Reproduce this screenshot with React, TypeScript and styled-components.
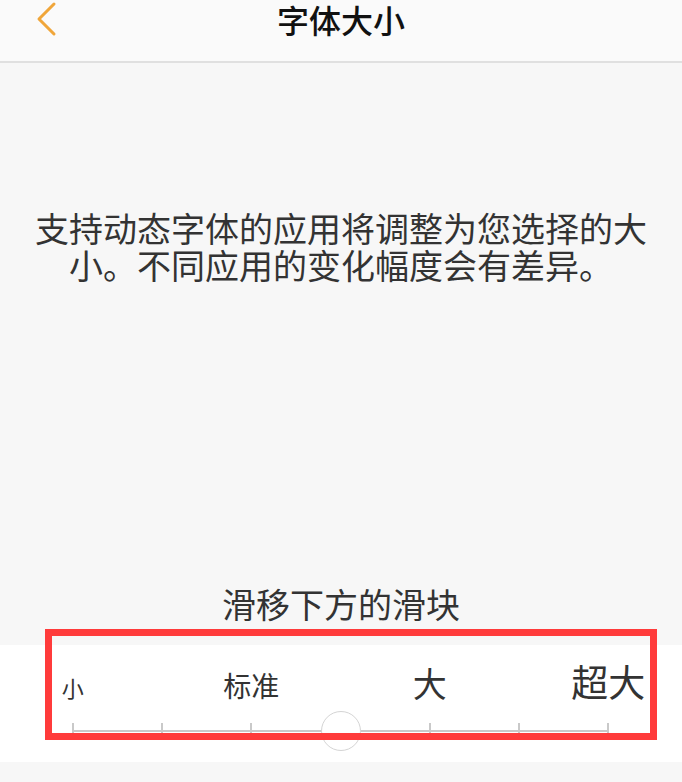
import { createGlobalStyle } from 'styled-components';
import styled from 'styled-components';

const GlobalStyle = createGlobalStyle`
  html, body {
    margin: 0;
    padding: 0;
    background: #f7f7f7;
  }
  body {
    font-family: "Noto Sans CJK SC", "Noto Sans", sans-serif;
    color: #333;
  }
`;

const sizes = [
  { label: '小', font: 22 },
  null,
  { label: '标准', font: 28 },
  null,
  { label: '大', font: 34 },
  null,
  { label: '超大', font: 37 },
];

export default function App() {
  return (
    <>
      <GlobalStyle />
      <Page>
        <Header>
          <BackButton aria-label="返回">
            <svg width="22" height="36" viewBox="0 0 22 36">
              <polyline
                points="18,3 3,18 18,33"
                fill="none"
                stroke="#f0a63a"
                strokeWidth="3"
                strokeLinecap="round"
                strokeLinejoin="round"
              />
            </svg>
          </BackButton>
          <Title>字体大小</Title>
          <span />
        </Header>

        <Preview>
          <Description>支持动态字体的应用将调整为您选择的大小。不同应用的变化幅度会有差异。</Description>
          <Hint>滑移下方的滑块</Hint>
        </Preview>

        <SliderPanel>
          <Labels>
            {sizes.map((s, i) => (
              <Label key={i} $size={s?.font ?? 0}>
                {s?.label}
              </Label>
            ))}
          </Labels>
          <TrackArea>
            <Rail>
              {sizes.map((_, i) => (
                <Tick key={i} />
              ))}
              <Thumb />
            </Rail>
          </TrackArea>
          <Annotation />
        </SliderPanel>

        <FooterStrip />
      </Page>
    </>
  );
}

const Page = styled.div`
  width: 682px;
  min-height: 782px;
  display: flex;
  flex-direction: column;
`;

const Header = styled.header`
  height: 61px;
  display: grid;
  grid-template-columns: 1fr auto 1fr;
  align-items: start;
  background: #fafafa;
  border-bottom: 2px solid #e0e0e0;
`;

const BackButton = styled.button`
  justify-self: start;
  margin: 0 0 0 36px;
  padding: 0;
  border: none;
  background: none;
  display: flex;
  height: 37px;
  align-items: center;
`;

const Title = styled.h1`
  margin: 0;
  padding-top: 1px;
  font-size: 32px;
  line-height: 36px;
  font-weight: 500;
  color: #111;
`;

const Preview = styled.section`
  height: 582px;
  box-sizing: border-box;
  padding: 146px 18px 21px;
  display: flex;
  flex-direction: column;
  align-items: center;
  background: #f7f7f7;
`;

const Description = styled.p`
  margin: 0;
  font-size: 34px;
  line-height: 37px;
  text-align: center;
  color: #333;
`;

const Hint = styled.div`
  margin-top: auto;
  font-size: 34px;
  line-height: 40px;
  color: #333;
`;

const SliderPanel = styled.section`
  position: relative;
  height: 117px;
  box-sizing: border-box;
  padding: 18px 0 0 28px;
  background: #fff;
`;

const Labels = styled.div`
  width: 625px;
  height: 37px;
  display: grid;
  grid-template-columns: repeat(7, 1fr);
  align-items: baseline;
`;

const Label = styled.span<{ $size: number }>`
  justify-self: center;
  white-space: nowrap;
  font-size: ${p => p.$size}px;
  line-height: 1;
  color: #333;
`;

const TrackArea = styled.div`
  width: 625px;
  height: 40px;
  margin-top: 11px;
  display: flex;
  align-items: center;
`;

const Rail = styled.div`
  position: relative;
  flex: 1;
  margin: 0 44.5px;
  height: 16px;
  display: flex;
  justify-content: space-between;

  &::before {
    content: '';
    position: absolute;
    left: 0;
    right: 0;
    top: 7px;
    height: 2px;
    background: #c9c9c9;
  }
`;

const Tick = styled.span`
  width: 2px;
  height: 16px;
  background: #c9c9c9;
  margin-left: -1px;
  margin-right: -1px;
`;

const Thumb = styled.span`
  position: absolute;
  left: 50%;
  top: 50%;
  width: 38px;
  height: 38px;
  transform: translate(-50%, -50%);
  border-radius: 50%;
  background: #fff;
  border: 1.5px solid #d4d4d4;
`;

const Annotation = styled.div`
  position: absolute;
  left: 45px;
  top: -16px;
  width: 612px;
  height: 111px;
  box-sizing: border-box;
  border: 7px solid #ff3b3b;
  pointer-events: none;
`;

const FooterStrip = styled.div`
  flex: 1;
  background: #f7f7f7;
`;
